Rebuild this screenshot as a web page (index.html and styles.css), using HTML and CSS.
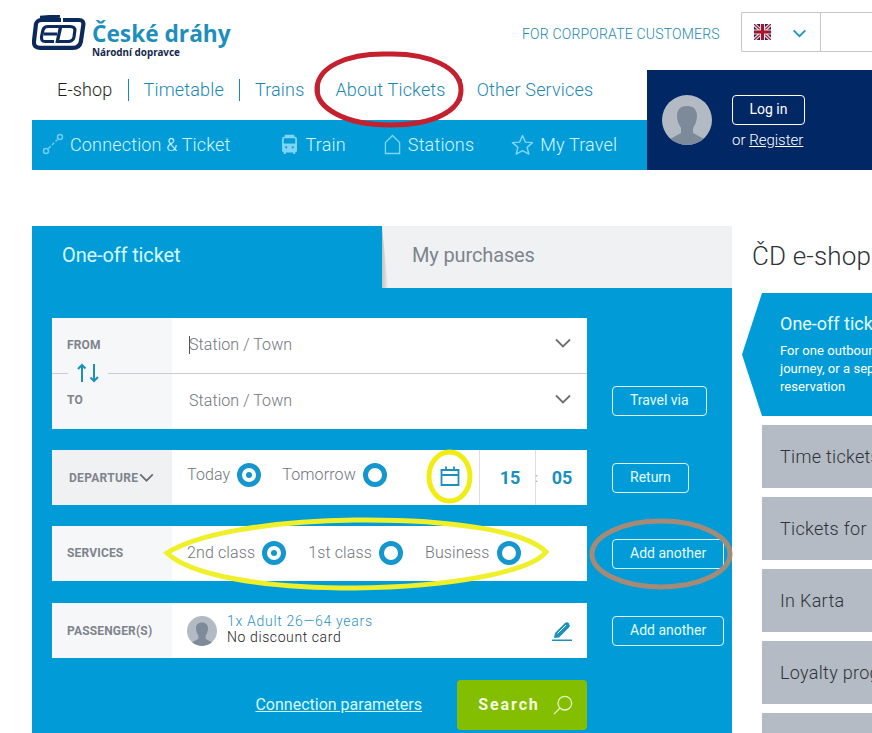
FILE: index.html
```html
<!DOCTYPE html>
<html lang="en">
<head>
<meta charset="utf-8">
<title>České dráhy e-shop</title>
<link rel="stylesheet" href="styles.css">
</head>
<body>
<div class="page">
  <header class="top">
    <a class="brand">
      <svg class="logo" viewBox="5 5 54 36" width="54" height="36">
        <path d="M13 7.500 L33 6" fill="none" stroke="#0b2a5b" stroke-width="3.600"/>
        <path d="M34 10 H15 Q10 10 9 14 L7 31 Q6.300 37.800 13 37.800 H46 Q52.500 37.800 53.800 32 L56.300 15 Q57 10 52 10 H36" fill="none" stroke="#0b2a5b" stroke-width="4.200"/>
        <path d="M32 16.500 H21 Q17 16.500 16 20 L14.500 27 Q14 31.500 18 31.500 H27 M17 24 H30" fill="none" stroke="#0b2a5b" stroke-width="3.200"/>
        <path d="M34 15 L30 33" fill="none" stroke="#0b2a5b" stroke-width="3.400"/>
        <path d="M34 16.500 H43 Q48.500 16.500 47.800 21 L47 27 Q46 31.500 41 31.500 H30" fill="none" stroke="#0b2a5b" stroke-width="3.200"/>
      </svg>
      <span class="brand-text">
        <span class="brand-name">České dráhy</span>
        <span class="brand-sub">Národní dopravce</span>
      </span>
    </a>
    <a class="corporate">FOR CORPORATE CUSTOMERS</a>
    <div class="lang">
      <div class="lang-flag">
        <svg viewBox="0 0 17 16" width="17" height="16">
          <rect width="17" height="16" fill="#2a2350"/>
          <path d="M0 0L17 16M17 0L0 16" stroke="#e8dfe4" stroke-width="3.500"/>
          <path d="M0 0L17 16M17 0L0 16" stroke="#a5142e" stroke-width="1.200"/>
          <path d="M8.500 0V16M0 8H17" stroke="#e8dfe4" stroke-width="5"/>
          <path d="M8.500 0V16M0 8H17" stroke="#a5142e" stroke-width="3"/>
        </svg>
        <svg class="lang-caret" viewBox="0 0 16 10" width="15" height="9"><path d="M1.500 1.500L8 8L14.500 1.500" fill="none" stroke="#1a95c6" stroke-width="2"/></svg>
      </div>
    </div>
  </header>

  <div class="masthead">
    <div class="nav-col">
      <nav class="nav">
        <a class="nav-item nav-active">E-shop</a>
        <a class="nav-item">Timetable</a>
        <a class="nav-item">Trains</a>
        <a class="nav-item">About Tickets</a>
        <a class="nav-item nav-last">Other Services</a>
      </nav>
      <div class="subnav">
        <a class="sub-item sub-conn">
          <svg viewBox="0 0 22 22" width="22" height="22" class="sub-icon"><circle cx="4" cy="18" r="2.500" fill="none" stroke="#6fcdf0" stroke-width="1.500"/><circle cx="18" cy="4" r="2.500" fill="none" stroke="#6fcdf0" stroke-width="1.500"/><path d="M6.500 15.500L15.500 6.500" stroke="#6fcdf0" stroke-width="1.500" stroke-dasharray="3 2"/></svg>
          Connection &amp; Ticket
        </a>
        <a class="sub-item sub-train">
          <svg viewBox="0 0 18 22" width="17" height="21" class="sub-icon"><path d="M4 1.500H14M2 5.500Q2 3.500 4 3.500H14Q16 3.500 16 5.500V17Q16 18.500 14 18.500H4Q2 18.500 2 17Z" fill="none" stroke="#7fd6f4" stroke-width="1.800"/><rect x="2" y="10" width="14" height="8.500" fill="#7fd6f4"/><circle cx="5.500" cy="14" r="1.200" fill="#019cd8"/><circle cx="12.500" cy="14" r="1.200" fill="#019cd8"/><path d="M4 19V21M14 19V21" stroke="#7fd6f4" stroke-width="2"/></svg>
          Train
        </a>
        <a class="sub-item sub-station">
          <svg viewBox="0 0 18 22" width="17" height="21" class="sub-icon"><path d="M1.500 20.500V9L9 1.500L16.500 9V20.500Z" fill="none" stroke="#7fd6f4" stroke-width="1.400"/></svg>
          Stations
        </a>
        <a class="sub-item sub-star">
          <svg viewBox="0 0 24 22" width="23" height="21" class="sub-icon"><path d="M12 1.500L15 8.500L22.500 9L16.800 14L18.600 21L12 17.300L5.400 21L7.200 14L1.500 9L9 8.500Z" fill="none" stroke="#7fd6f4" stroke-width="1.500" stroke-linejoin="round"/></svg>
          My Travel
        </a>
      </div>
    </div>
    <aside class="account">
      <svg class="avatar" viewBox="0 0 50 50" width="50" height="50">
        <defs><clipPath id="avatar-clip"><circle cx="25" cy="25" r="25"/></clipPath></defs>
        <circle cx="25" cy="25" r="25" fill="#b4bac3"/>
        <path clip-path="url(#avatar-clip)" d="M25 11C18 11 15 15 15 21C15 26 17 30 19 33L19 38L8 44V50H42V44L31 38L31 33C33 30 35 26 35 21C35 15 32 11 25 11Z" fill="#7c8a9a"/>
      </svg>
      <div class="account-actions">
        <a class="login">Log in</a>
        <span class="register-line">or <a class="register">Register</a></span>
      </div>
    </aside>
  </div>

  <main class="main">
    <section class="panel">
      <div class="tabs">
        <a class="tab tab-on">One-off ticket</a>
        <a class="tab tab-off">My purchases</a>
      </div>
      <div class="form">
        <div class="form-row">
          <div class="route">
            <div class="route-line route-from">
              <span class="label">FROM</span>
              <span class="value"><i class="caret"></i>Station / Town</span>
              <svg class="chev" viewBox="0 0 16 10" width="16" height="10"><path d="M1 1.500L8 8.500L15 1.500" fill="none" stroke="#6b6e72" stroke-width="1.800"/></svg>
            </div>
            <div class="route-line">
              <span class="label label-to">TO</span>
              <span class="value">Station / Town</span>
              <svg class="chev" viewBox="0 0 16 10" width="16" height="10"><path d="M1 1.500L8 8.500L15 1.500" fill="none" stroke="#6b6e72" stroke-width="1.800"/></svg>
            </div>
            <div class="swap">
              <svg viewBox="0 0 24 24" width="24" height="24"><path d="M6 21V4M2 8L6 4L9.500 7.500M18 3V20M14.500 16.500L18 20L22 16" fill="none" stroke="#1a90bd" stroke-width="2"/></svg>
            </div>
          </div>
          <a class="side-btn btn-via">Travel via</a>
        </div>

        <div class="form-row">
          <div class="field">
            <span class="label label-dep">DEPARTURE<svg viewBox="0 0 16 10" width="15" height="9"><path d="M1 1.500L8 8.500L15 1.500" fill="none" stroke="#6b6e72" stroke-width="2"/></svg></span>
            <div class="options options-dep">
              <span class="opt opt-today">Today<i class="radio radio-on"></i></span>
              <span class="opt">Tomorrow<i class="radio"></i></span>
            </div>
            <svg class="calendar" viewBox="0 0 20 20" width="20" height="20"><path d="M1.500 4H18.500V19H1.500ZM1.500 9H18.500M6 0.500V5M14 0.500V5" fill="none" stroke="#1a90bd" stroke-width="1.800"/></svg>
            <span class="time time-h">15</span>
            <span class="time time-m">05</span>
          </div>
          <a class="side-btn">Return</a>
        </div>

        <div class="form-row">
          <div class="field">
            <span class="label label-srv">SERVICES</span>
            <div class="options options-srv">
              <span class="opt">2nd class<i class="radio radio-on"></i></span>
              <span class="opt">1st class<i class="radio"></i></span>
              <span class="opt">Business<i class="radio"></i></span>
            </div>
          </div>
          <a class="side-btn">Add another</a>
        </div>

        <div class="form-row row-pass">
          <div class="field">
            <span class="label">PASSENGER(S)</span>
            <div class="pass">
              <svg viewBox="0 0 50 50" width="30" height="30">
                <circle cx="25" cy="25" r="25" fill="#b4bac3"/>
                <path clip-path="url(#avatar-clip)" d="M25 11C18 11 15 15 15 21C15 26 17 30 19 33L19 38L8 44V50H42V44L31 38L31 33C33 30 35 26 35 21C35 15 32 11 25 11Z" fill="#7c8a9a"/>
              </svg>
              <div class="pass-text">
                <span class="pass-type">1x Adult 26—64 years</span>
                <span class="pass-card">No discount card</span>
              </div>
            </div>
            <svg class="edit" viewBox="0 0 20 20" width="20" height="20"><path d="M2 17L3 12L13 2Q15 0.500 17 2.500Q18.500 4.500 17 6.500L7 16.500Z" fill="#1a90bd"/><path d="M5.500 12.500L14 4" stroke="#fff" stroke-width="1"/><path d="M0 19.300H20" stroke="#1a90bd" stroke-width="1.600"/></svg>
          </div>
          <a class="side-btn">Add another</a>
        </div>

        <div class="actions">
          <a class="params">Connection parameters</a>
          <a class="search"><span class="search-text">Search</span>
            <svg viewBox="0 0 22 22" width="20" height="20"><circle cx="13" cy="9" r="7.500" fill="none" stroke="#e7f3c4" stroke-width="1.400"/><path d="M7.500 14.500L1 21" stroke="#e7f3c4" stroke-width="1.400"/></svg>
          </a>
        </div>
      </div>
    </section>

    <section class="aside">
      <h1 class="aside-title">ČD e-shop</h1>
      <div class="menu-current">
        <span class="menu-current-title">One-off ticket</span>
        <p class="menu-current-text">For one outbound<br>journey, or a separate<br>reservation</p>
      </div>
      <a class="tile">Time tickets</a>
      <a class="tile">Tickets for groups</a>
      <a class="tile">In Karta</a>
      <a class="tile">Loyalty programme</a>
      <a class="tile"></a>
    </section>
  </main>

  <svg class="marks" viewBox="0 0 872 733" width="872" height="733">
    <path d="M388 54C345 53 318 68 317 88C316 108 345 125 390 125C435 125 461 110 461 90C461 68 430 53 388 54Z" fill="none" stroke="#c4202e" stroke-width="5"/>
    <ellipse cx="449.500" cy="476.500" rx="20.500" ry="24.500" fill="none" stroke="#f1ec12" stroke-width="5"/>
    <path d="M167 553C195 535 265 521 355 520C445 519 525 530 546 552C530 572 450 587 355 588C260 588 190 575 167 553Z" fill="none" stroke="#eff02a" stroke-width="5"/>
    <ellipse cx="661" cy="554" rx="69" ry="33" fill="none" stroke="#a58b76" stroke-width="5"/>
  </svg>
</div>
</body>
</html>
```

FILE: styles.css
```css
* { box-sizing: border-box; }
html, body { margin: 0; padding: 0; }
body { background: #fff; font-family: Roboto, "Liberation Sans", sans-serif; overflow: hidden; }
a { cursor: pointer; }
.page { position: relative; width: 872px; height: 733px; overflow: hidden; }

/* header */
.top { display: flex; align-items: flex-start; height: 70px; padding: 12px 0 0 32px; }
.brand { display: flex; align-items: flex-start; padding-top: 3px; width: 490px; flex-shrink: 0; }
.logo { display: block; flex-shrink: 0; margin-right: 6px; }
.brand-text { display: flex; flex-direction: column; }
.brand-name { font-family: "Open Sans", sans-serif; font-weight: 700; font-size: 22.700px; line-height: 24px; color: #1e8fbb; margin-top: 7px; white-space: nowrap; }
.brand-sub { font-family: "Noto Sans", sans-serif; font-weight: 700; font-size: 9.900px; line-height: 12px; color: #17294d; white-space: nowrap; }
.corporate { font-size: 14px; font-weight: 300; color: #1b87b4; letter-spacing: 0.2px; line-height: 16px; margin-top: 14px; white-space: nowrap; width: 219px; }
.lang { width: 131px; height: 40px; border: 1px solid #c5c8cc; border-right: 0; border-radius: 2px 0 0 2px; flex-shrink: 0; }
.lang-flag { display: flex; align-items: center; width: 79px; height: 38px; padding: 0 12px; border-right: 1px solid #c5c8cc; }
.lang-caret { margin-left: 21px; margin-top: 2px; }

.masthead { display: flex; height: 100px; }
.nav-col { width: 615px; margin-left: 32px; flex-shrink: 0; }
.nav { display: flex; align-items: center; height: 50px; padding: 0 0 10px 25px; }
.nav-item { font-size: 18px; font-weight: 300; color: #1b87b4; line-height: 22px; letter-spacing: 0.17px; padding-right: 15px; margin-right: 15px; border-right: 1px solid #1b87b4; white-space: nowrap; }
.nav-active { color: #1f1f1f; }
.nav-last { border-right: 0; }

.subnav { display: flex; align-items: center; height: 50px; background: #019cd8; padding: 0 0 2px 10px; }
.sub-item { display: flex; align-items: center; font-size: 18px; font-weight: 300; letter-spacing: 0.17px; color: #d6f6ff; white-space: nowrap; }
.sub-icon { flex-shrink: 0; }
.sub-conn svg { margin-right: 6px; }
.sub-train { margin-left: 50px; }
.sub-train svg { margin-right: 8px; }
.sub-station { margin-left: 38px; }
.sub-station svg { margin-right: 7px; }
.sub-star { margin-left: 37px; }
.sub-star svg { margin-right: 6px; }

.account { flex: 1; display: flex; align-items: flex-start; background: #012865; padding: 25px 0 0 15px; }
.avatar { display: block; flex-shrink: 0; }
.account-actions { display: flex; flex-direction: column; align-items: flex-start; margin-left: 20px; }
.login { display: block; width: 73px; height: 30px; border: 1px solid #fff; border-radius: 4px; color: #fff; font-size: 14px; line-height: 26px; text-align: center; }
.register-line { font-size: 15px; font-weight: 300; color: #fff; line-height: 18px; margin-top: 6px; white-space: nowrap; }
.register { text-decoration: underline; }

/* main */
.main { display: flex; align-items: flex-start; margin: 56px 0 0 32px; }
.panel { width: 700px; height: 520px; background: #019cd8; flex-shrink: 0; }
.tabs { display: flex; height: 62px; }
.tab { display: block; width: 350px; font-size: 20px; line-height: 58px; letter-spacing: -0.13px; padding-left: 30px; white-space: nowrap; }
.tab-on { color: #d6f9ff; }
.tab-off { position: relative; background: #f0f1f3; color: #7d848d; font-weight: 400; }
.tab-off::before { content: ""; position: absolute; left: 0; top: 0; width: 6px; height: 100%; background: linear-gradient(90deg, #bfc3c7, #eceef0); clip-path: polygon(0 0, 100% 100%, 0 100%); }

.form { display: flex; flex-direction: column; gap: 21px; padding: 30px 20px 0; }
.form-row { display: flex; align-items: center; gap: 25px; }
.row-pass { margin-top: 1px; }
.route { position: relative; width: 535px; flex-shrink: 0; background: #fff; }
.route-line { display: flex; align-items: center; height: 55.500px; background: linear-gradient(90deg, #f6f7f8 120px, #fff 120px); }
.route-from { border-bottom: 1px solid #c9ccd0; }
.label { width: 120px; flex-shrink: 0; padding-left: 15px; font-size: 12px; font-weight: 700; letter-spacing: 0.17px; color: #7d848d; white-space: nowrap; }
.label-to { position: relative; top: -1px; }
.label-srv { position: relative; top: -1px; }
.value { position: relative; top: -1px; flex: 1; padding-left: 17px; font-size: 16px; font-weight: 300; letter-spacing: 0.07px; color: #6f757d; }
.caret { position: absolute; left: 17px; top: 1px; width: 1px; height: 18px; background: #555; }
.chev { margin-right: 16px; flex-shrink: 0; position: relative; top: -2px; }
.swap { position: absolute; left: 16px; top: 43px; width: 40px; height: 25px; display: flex; justify-content: center; background: #f6f7f8; }

.field { display: flex; align-items: center; width: 535px; height: 55px; flex-shrink: 0; background: linear-gradient(90deg, #f6f7f8 120px, #fff 120px); }
.label-dep { display: flex; align-items: center; height: 100%; padding-left: 17px; background: #f0f1f3; letter-spacing: 0.3px; }
.label-dep svg { margin-left: 1px; }
.options { display: flex; align-items: center; padding-left: 15px; }
.options-dep { gap: 21px; margin-top: -6px; width: 268px; flex-shrink: 0; }
.options-srv { gap: 22px; margin-top: -2px; }
.opt { display: flex; align-items: center; gap: 7px; font-size: 16px; font-weight: 300; letter-spacing: 0.12px; color: #6f757d; white-space: nowrap; }
.radio { display: block; width: 24px; height: 24px; border: 5px solid #1496cf; border-radius: 50%; background: #fff; position: relative; }
.radio-on::after { content: ""; position: absolute; left: 4px; top: 4px; width: 6px; height: 6px; border-radius: 50%; background: #1496cf; }
.calendar { flex-shrink: 0; margin-right: 19px; margin-top: -3px; }
.time { position: relative; display: block; height: 100%; border-left: 1px solid #dcdee0; width: 56px; text-align: center; font-size: 18px; font-weight: 700; line-height: 56px; color: #1a90bd; flex-shrink: 0; }
.time-h { padding-left: 5px; }
.time-m { width: 52px; padding-left: 1px; }
.time-m::before { content: ":"; position: absolute; left: -1px; top: 0; font-size: 12px; font-weight: 400; color: #9aa0a6; }

.pass { display: flex; align-items: center; padding-left: 15px; flex: 1; }
.pass svg { display: block; flex-shrink: 0; }
.pass-text { display: flex; flex-direction: column; margin: -3px 0 0 10px; font-size: 14px; line-height: 16px; }
.pass-type { color: #2c93bd; font-weight: 300; letter-spacing: 0.7px; }
.pass-card { color: #1c1c1c; font-weight: 300; letter-spacing: 0.6px; }
.edit { margin-right: 15px; flex-shrink: 0; }

.side-btn { display: block; flex-shrink: 0; height: 30px; border: 1px solid #dff6ff; border-radius: 4px; padding: 0 17px; font-size: 14px; line-height: 26px; color: #e3fbff; white-space: nowrap; }
.btn-via { align-self: flex-end; margin-bottom: 13px; }

.actions { display: flex; align-items: center; justify-content: flex-end; gap: 35px; width: 535px; margin-top: 1px; }
.params { position: relative; top: -1px; font-size: 16px; font-weight: 400; color: #d6f9ff; text-decoration: underline; white-space: nowrap; }
.search { display: flex; align-items: center; justify-content: center; gap: 13px; width: 130px; height: 50px; padding-left: 7px; background: #84be00; border-radius: 4px; color: #f4fbe0; font-size: 16px; font-weight: 700; letter-spacing: 1.900px; white-space: nowrap; }
.search-text { position: relative; top: -1px; }

/* right column */
.aside { margin-left: 20px; width: 300px; flex-shrink: 0; }
.aside-title { margin: 14px 0 20px; font-size: 26px; line-height: 33px; font-weight: 300; letter-spacing: 0.15px; color: #2e3338; white-space: nowrap; }
.menu-current { width: 250px; height: 123px; margin-left: -10px; background: #019cd8; clip-path: polygon(20px 0, 100% 0, 100% 100%, 20px 100%, 0 50%); padding: 20px 0 0 38px; color: #fff; }
.menu-current-title { display: block; font-size: 18px; line-height: 22px; color: #e3fbff; white-space: nowrap; }
.menu-current-text { margin: 7px 0 0; font-size: 13px; line-height: 18px; letter-spacing: 0.05px; white-space: nowrap; }
.tile { display: block; height: 63px; margin: 9px 0 0 10px; width: 240px; background: #b4bbc4; padding-left: 18px; font-size: 18px; line-height: 63px; font-weight: 300; letter-spacing: 0.3px; color: #2e3338; white-space: nowrap; }

/* hand-drawn annotations laid over the screenshot */
.marks { position: absolute; left: 0; top: 0; pointer-events: none; }
```
